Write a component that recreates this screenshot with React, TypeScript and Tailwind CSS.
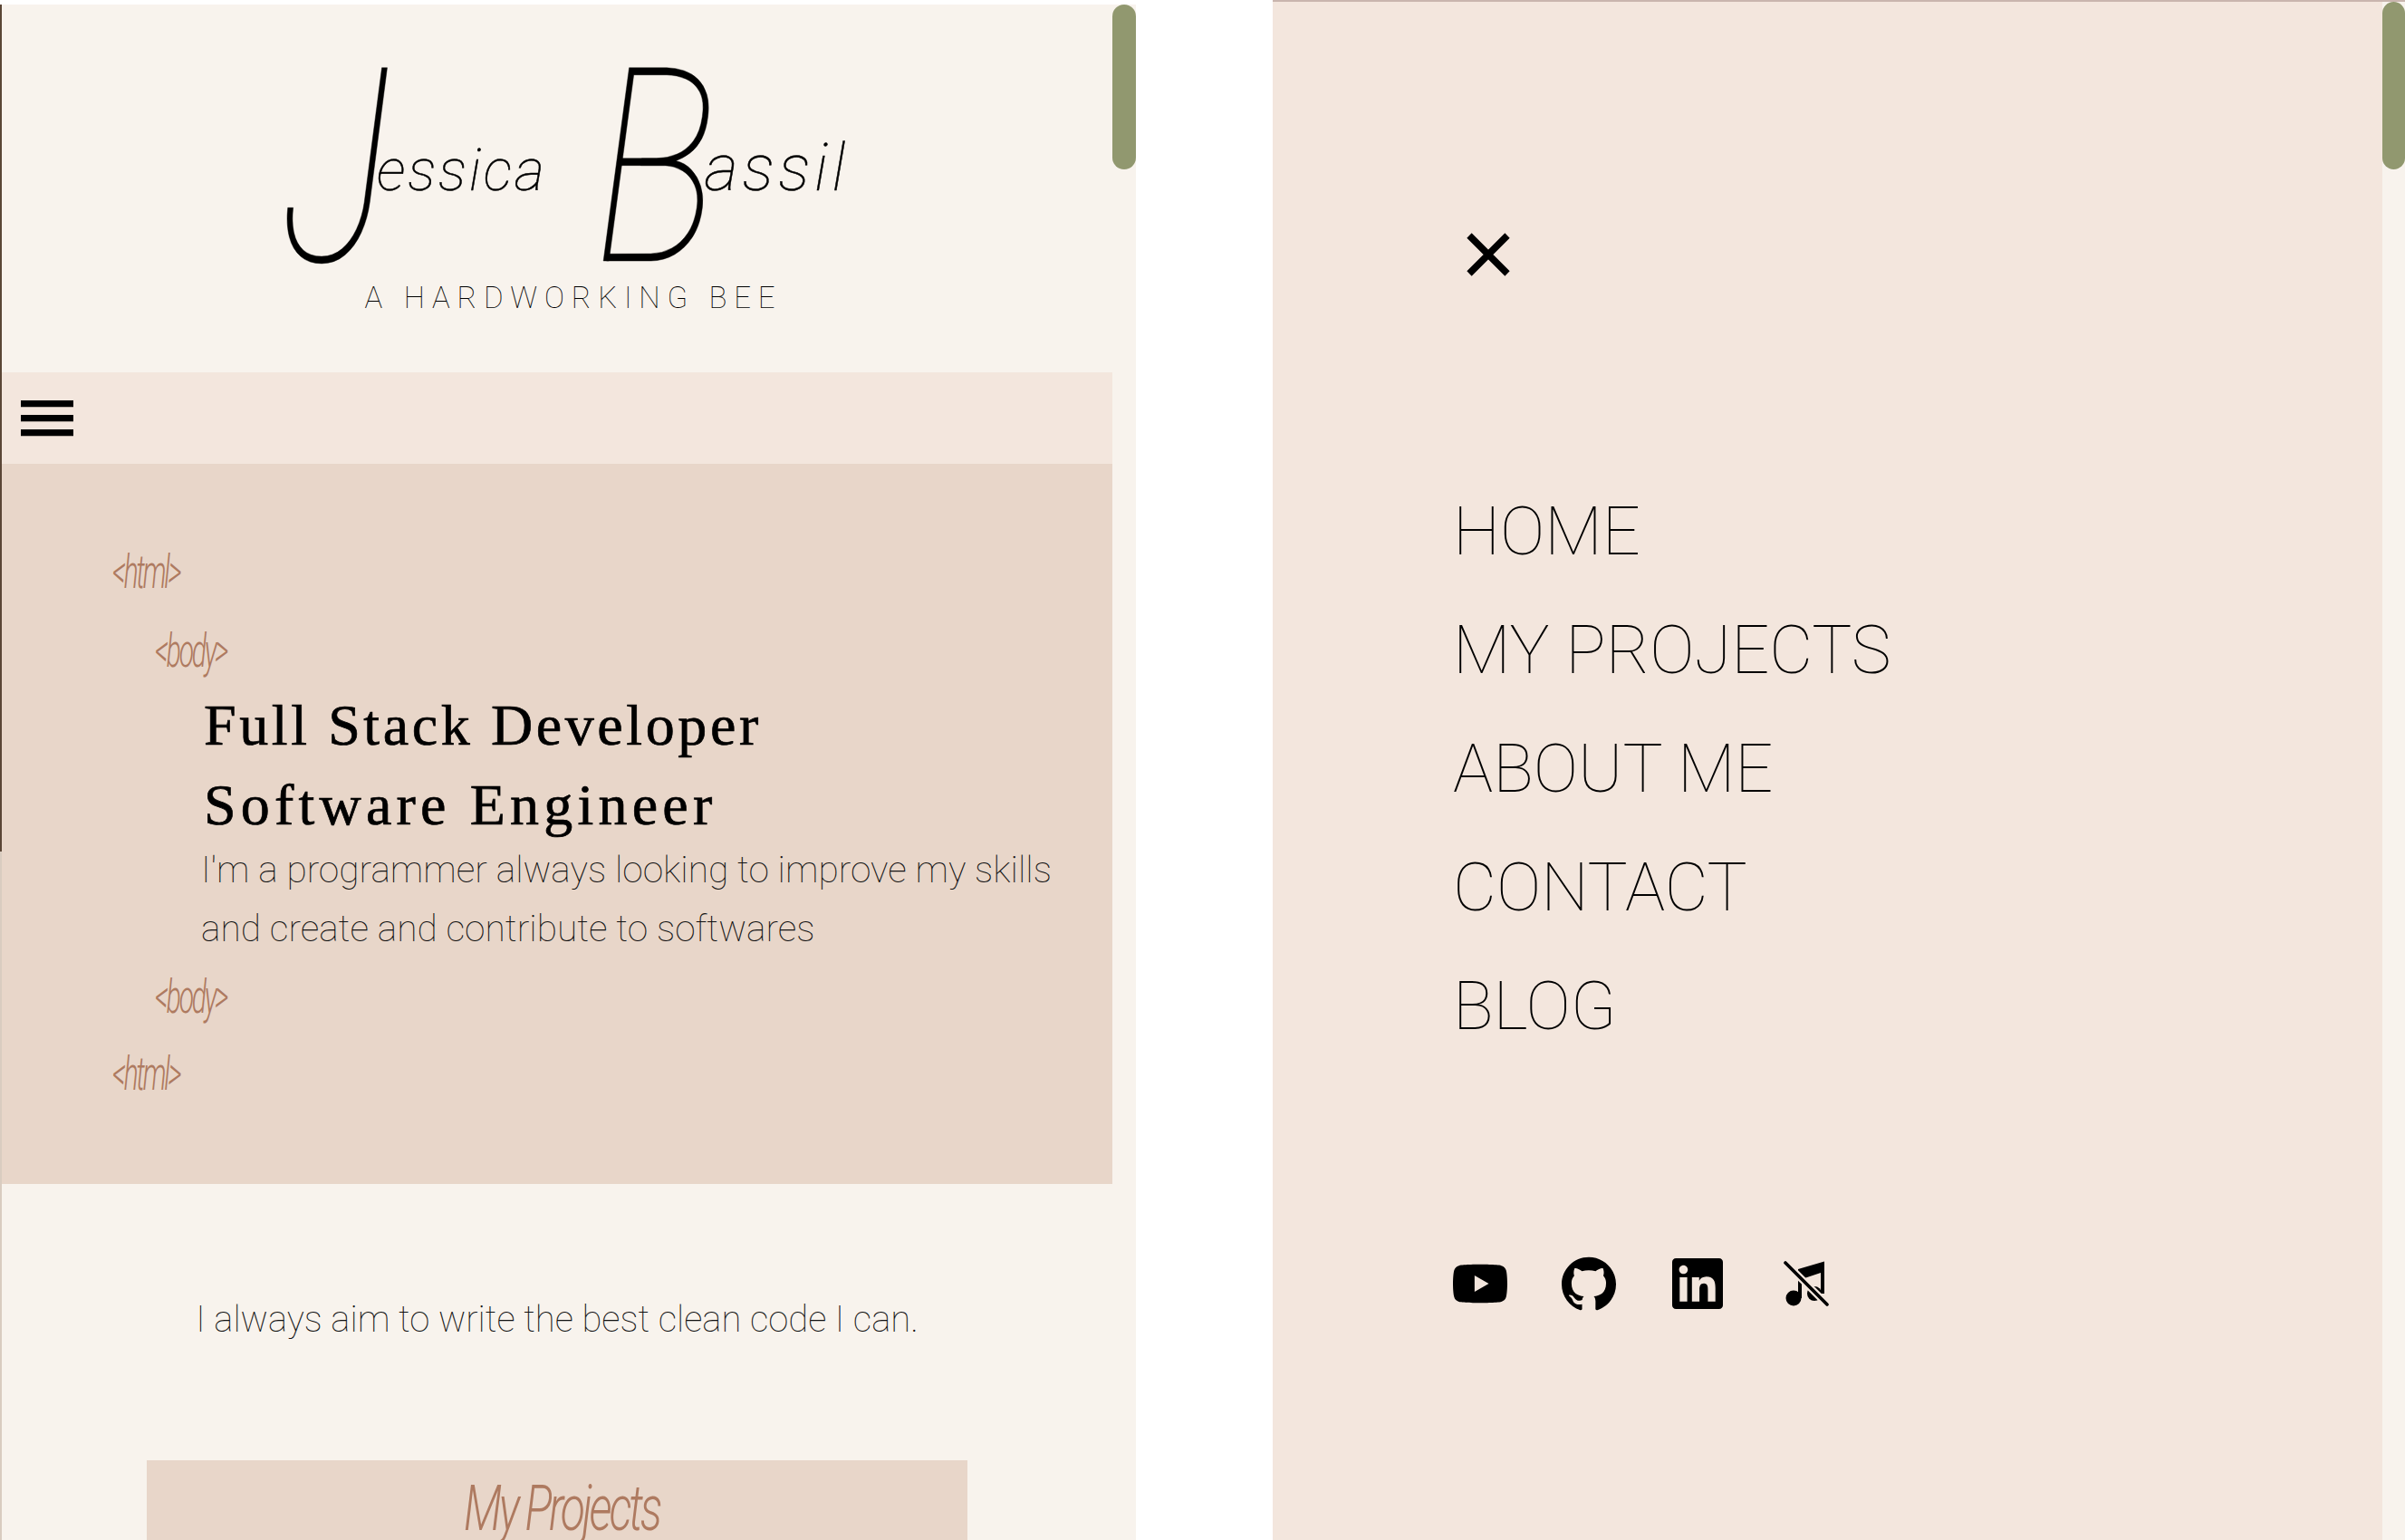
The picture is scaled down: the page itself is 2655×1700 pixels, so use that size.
import { SiGithub, SiLinkedin, SiYoutube } from "react-icons/si";

const menuItems = ["HOME", "MY PROJECTS", "ABOUT ME", "CONTACT", "BLOG"];

function Tag({ label, indent }: { label: string; indent: string }) {
  return (
    <div
      className={`h-[60px] flex items-center ${indent} font-['Roboto'] font-light italic text-[30px] tracking-[-2.2px] text-[#ae7a60]`}
    >
      <span className="scale-y-[1.7]">{label}</span>
    </div>
  );
}

function MusicOffIcon() {
  return (
    <svg viewBox="0 0 50 50" className="w-[50px] h-[50px]">
      <path d="M16 9 L45 0.5 V36 H41 V13 L20 20 V41 H16 Z" fill="#000" />
      <circle cx="11" cy="41" r="8.5" fill="#000" />
      <circle cx="34" cy="36" r="8" fill="#000" />
      <path d="M1 1 L48 48" stroke="#f3e6dd" strokeWidth="8" />
      <path d="M2 2 L48 48" stroke="#000" strokeWidth="3.6" strokeLinecap="round" />
    </svg>
  );
}

function HamburgerBar() {
  return <div className="w-[58px] h-[7px] bg-black shadow-[0_1px_0_#b5aaa2]" />;
}

function LeftPanel() {
  return (
    <div className="w-[1254px] shrink-0 h-full pt-[5px] flex">
      <div className="w-[2px] shrink-0 h-full flex flex-col">
        <div className="h-[935px] bg-[#5a4636]" />
        <div className="flex-1 bg-[#d9ccc0]" />
      </div>
      <main className="w-[1226px] shrink-0 h-full flex flex-col bg-[#f8f3ed]">
        <header className="h-[406px] shrink-0 flex flex-col items-center">
          <div className="h-[304px] pt-[56px] pl-[20px] whitespace-nowrap font-['Roboto'] font-thin italic leading-[250px] text-black [-webkit-text-stroke:0.5px_black]">
            <span className="inline-block w-[104px] text-[300px] align-[-78px] origin-left scale-x-[0.75]">J</span>
            <span className="text-[64px] tracking-[3px]">essica</span>
            <span className="inline-block w-[52px]" />
            <span className="inline-block w-[122px] text-[300px] align-[-78px] origin-left scale-x-[0.77]">B</span>
            <span className="text-[72px] tracking-[5px]">assil</span>
          </div>
          <p className="pl-[36px] font-['Roboto'] font-thin text-[33px] leading-[40px] tracking-[7.8px] text-black">
            A HARDWORKING BEE
          </p>
        </header>

        <nav className="h-[101px] shrink-0 bg-[#f3e6dd] flex items-center pl-[21px]">
          <div className="flex flex-col gap-[9px]">
            <HamburgerBar />
            <HamburgerBar />
            <HamburgerBar />
          </div>
        </nav>

        <section className="h-[795px] shrink-0 bg-[#e8d6c9] pt-[89px]">
          <Tag label="<html>" indent="pl-[122px]" />
          <div className="mt-[27px]">
            <Tag label="<body>" indent="pl-[169px]" />
          </div>
          <div className="pl-[223px] mt-[9px]">
            <h1 className="font-['Liberation_Serif'] text-[64px] leading-[88px] text-black [-webkit-text-stroke:0.7px_black]">
              <span className="block tracking-[3.6px]">Full Stack Developer</span>
              <span className="block tracking-[5.2px]">Software Engineer</span>
            </h1>
            <p className="-mt-[5px] -ml-[3px] font-['Roboto'] font-thin text-[40.7px] leading-[65px] text-[#111]">
              I'm a programmer always looking to improve my skills
              <br />
              and create and contribute to softwares
            </p>
          </div>
          <div className="mt-[12px]">
            <Tag label="<body>" indent="pl-[169px]" />
          </div>
          <div className="mt-[25px]">
            <Tag label="<html>" indent="pl-[122px]" />
          </div>
        </section>

        <p className="mt-[117px] text-center font-['Roboto'] font-thin text-[40px] leading-[65px] text-[#111]">
          I always aim to write the best clean code I can.
        </p>

        <section className="mt-[123px] mx-auto w-[906px] flex-1 min-h-0 bg-[#e8d6c9] flex justify-center pt-[18px] pl-[10px] overflow-hidden">
          <h2 className="font-['Roboto'] font-light italic text-[50px] leading-[70px] tracking-[-3.2px] text-[#ae7a60] scale-y-[1.4]">
            My Projects
          </h2>
        </section>
      </main>
      <div className="w-[26px] shrink-0 h-full bg-[#f8f3ed]">
        <div className="h-[182px] w-full rounded-full bg-[#91986f]" />
      </div>
    </div>
  );
}

function RightPanel() {
  return (
    <div className="flex-1 h-full flex flex-col">
      <div className="h-[2px] shrink-0 bg-[#c9b5ae]" />
      <div className="flex-1 flex min-h-0">
        <aside className="flex-1 bg-[#f3e6dd] pl-[199px] pt-[255px]">
          <svg viewBox="0 0 48 48" className="ml-[15px] w-[48px] h-[48px]">
            <path d="M3 3 L45 45 M45 3 L3 45" stroke="#000" strokeWidth="7.5" />
          </svg>
          <ul className="mt-[216px]">
            {menuItems.map((item) => (
              <li
                key={item}
                className="h-[131px] flex items-center font-['Roboto'] font-thin text-[74px] text-black"
              >
                {item}
              </li>
            ))}
          </ul>
          <div className="mt-[211px] flex items-center gap-[60px] h-[60px] text-black">
            <div className="w-[60px] flex justify-center">
              <SiYoutube size={60} />
            </div>
            <div className="w-[60px] flex justify-center">
              <SiGithub size={60} />
            </div>
            <div className="w-[60px] flex justify-center">
              <SiLinkedin size={56} />
            </div>
            <div className="w-[60px] flex justify-center">
              <MusicOffIcon />
            </div>
          </div>
        </aside>
        <div className="w-[25px] shrink-0 bg-[#f8f3ed]">
          <div className="h-[185px] w-full rounded-full bg-[#91986f]" />
        </div>
      </div>
    </div>
  );
}

export default function App() {
  return (
    <div className="h-[1700px] w-full flex bg-white overflow-hidden">
      <LeftPanel />
      <div className="w-[151px] shrink-0" />
      <RightPanel />
    </div>
  );
}
